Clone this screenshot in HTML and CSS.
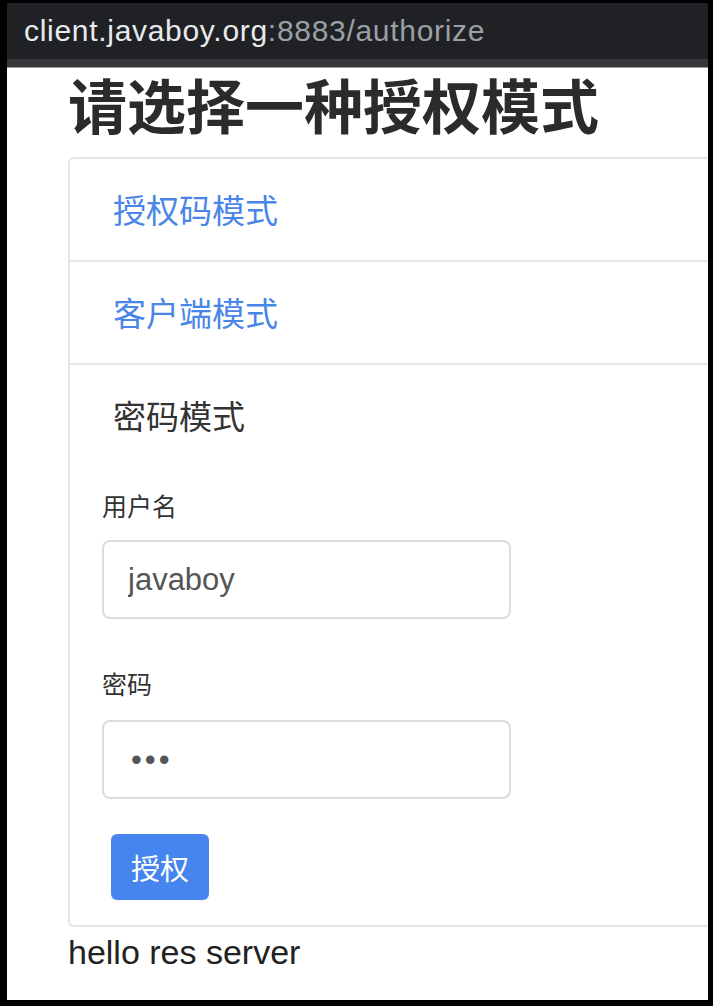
FILE: index.html
```html
<!DOCTYPE html>
<html lang="zh">
<head>
<meta charset="utf-8">
<title>authorize</title>
<link rel="stylesheet" href="styles.css">
</head>
<body>
<div class="frame">
  <div class="urlbar">
    <span class="host">client.javaboy.org</span><span class="path">:8883/authorize</span>
  </div>
  <div class="strip"></div>
  <main class="page">
    <h1 class="title">请选择一种授权模式</h1>
    <div class="card">
      <div class="item"><a class="link" href="#">授权码模式</a></div>
      <div class="item"><a class="link" href="#">客户端模式</a></div>
      <div class="item item-form">
        <div class="item-title">密码模式</div>
        <form class="form">
          <label class="label">用户名</label>
          <input class="input" type="text" value="javaboy">
          <label class="label label-2">密码</label>
          <input class="input input-pass" type="password" value="123">
          <button class="btn" type="button">授权</button>
        </form>
      </div>
    </div>
    <p class="hello">hello res server</p>
  </main>
</div>
</body>
</html>
```

FILE: styles.css
```css
html, body {
  margin: 0;
  padding: 0;
  background: #000;
}
.frame {
  box-sizing: border-box;
  width: 713px;
  height: 1006px;
  border-style: solid;
  border-color: #000;
  border-width: 3px 5px 6px 7px;
  background: #fff;
  display: flex;
  flex-direction: column;
}
.urlbar {
  height: 56px;
  background: #202124;
  display: flex;
  align-items: center;
  padding-left: 17px;
  font-family: "Liberation Sans", Arial, sans-serif;
  font-size: 30px;
  letter-spacing: 0.7px;
}
.host { color: #e8eaed; }
.path { color: #9aa0a6; }
.strip {
  height: 8px;
  background: #36373a;
  border-bottom: 1px solid #9a9a9a;
}
.page {
  flex: 1;
  padding-left: 61px;
  font-family: "Liberation Sans", "Noto Sans CJK SC", sans-serif;
  color: #333;
}
.title {
  margin: 0 0 17px 0;
  font-family: "Noto Sans CJK SC", sans-serif;
  font-size: 59px;
  line-height: 72px;
  font-weight: 600;
  color: #2b2b2b;
  white-space: nowrap;
}
.card {
  border: 2px solid #e6e6e6;
  border-right: none;
  border-radius: 6px 0 0 6px;
}
.item {
  padding: 28px 43px;
  border-top: 2px solid #e6e6e6;
  font-family: "Noto Sans CJK SC", sans-serif;
  font-size: 33px;
  line-height: 45px;
}
.item:first-child { border-top: none; }
.link {
  color: #4a86e8;
  text-decoration: none;
}
.item-form {
  padding: 28px 0 25px 32px;
}
.item-title {
  padding-left: 11px;
  color: #333;
}
.form {
  display: flex;
  flex-direction: column;
  align-items: flex-start;
  margin-top: 49px;
}
.label {
  font-family: "Noto Sans CJK SC", sans-serif;
  font-size: 25px;
  line-height: 36px;
  color: #333;
  margin-bottom: 17px;
}
.label-2 { margin-top: 46px; margin-bottom: 19px; }
.input {
  box-sizing: border-box;
  width: 409px;
  height: 79px;
  border: 2px solid #dcdcdc;
  border-radius: 8px;
  padding: 0 24px;
  font-family: "Liberation Sans", sans-serif;
  font-size: 31px;
  color: #555;
  background: #fff;
  outline: none;
}
.input-pass {
  letter-spacing: 3px;
  padding-left: 27px;
}
.btn {
  margin-top: 35px;
  margin-left: 9px;
  width: 98px;
  height: 66px;
  border: none;
  border-radius: 6px;
  background: #4684ee;
  color: #fff;
  font-family: "Noto Sans CJK SC", sans-serif;
  font-size: 29px;
  padding: 0;
}
.hello {
  margin: 3px 0 0 0;
  font-size: 34px;
  line-height: 44px;
  color: #222;
}
```
